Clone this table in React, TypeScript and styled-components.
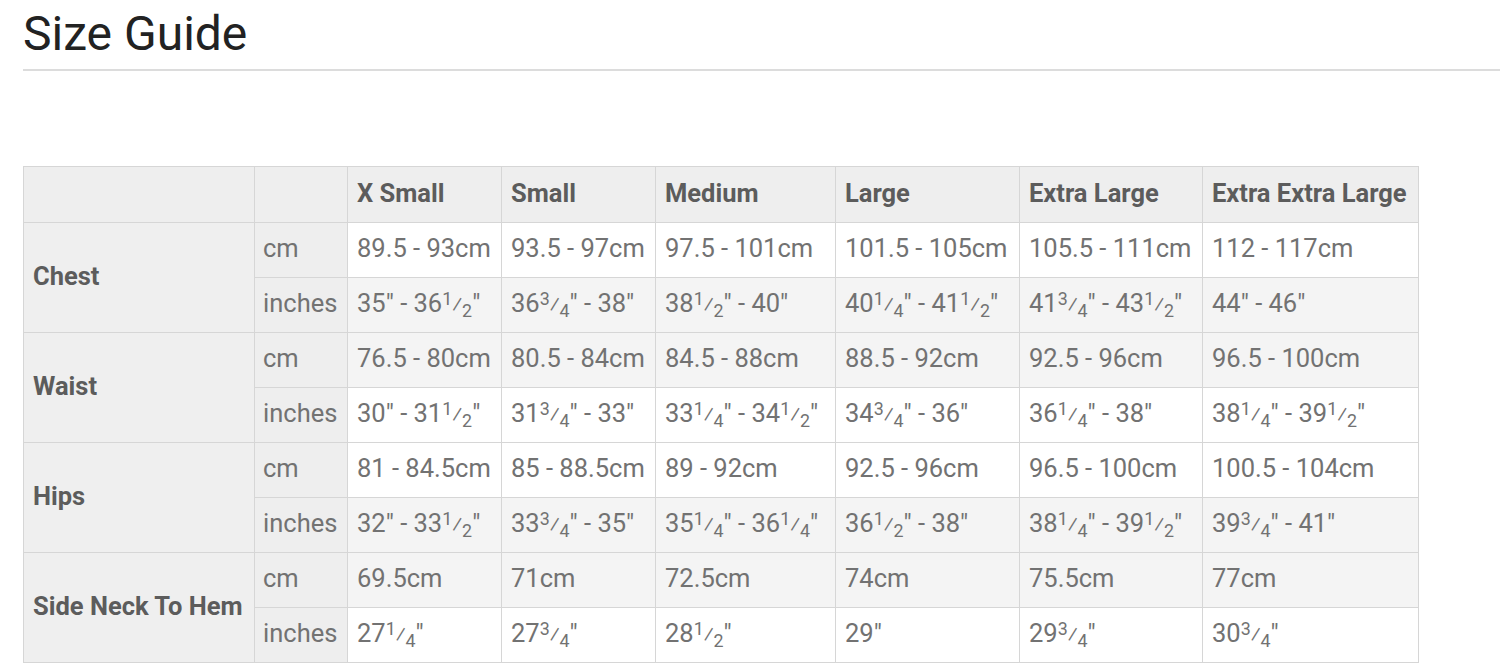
import React from "react";
import styled, { createGlobalStyle } from "styled-components";

const GlobalStyle = createGlobalStyle`
  body {
    margin: 0;
    background: #ffffff;
    font-family: Roboto, "Liberation Sans", Arial, sans-serif;
  }
`;

const Page = styled.div`
  padding: 0 0 0 23px;
`;

const Title = styled.h1`
  margin: 0;
  padding: 6px 0 7px;
  font-size: 48px;
  line-height: 56px;
  font-weight: 400;
  color: #222;
  border-bottom: 2px solid #dcdcdc;
`;

const Table = styled.table`
  margin-top: 95px;
  width: 1395px;
  border-collapse: collapse;
  table-layout: fixed;
  font-size: 25.5px;
  color: #727272;
`;

const HeadCell = styled.th`
  height: 51px;
  padding: 0 9px 4px;
  text-align: left;
  font-weight: 700;
  color: #5c5c5c;
  background: #eeeeee;
  border: 1px solid #d6d6d6;
  white-space: nowrap;
`;

const LabelCell = styled.th`
  padding: 0 9px 4px;
  text-align: left;
  font-weight: 700;
  color: #5c5c5c;
  background: #efefef;
  border: 1px solid #d6d6d6;
  white-space: nowrap;
`;

const UnitCell = styled.td`
  height: 50px;
  padding: 0 8px 4px;
  background: #eeeeee;
  border: 1px solid #d6d6d6;
  white-space: nowrap;
`;

const Cell = styled.td<{ $shade: boolean }>`
  height: 50px;
  padding: 0 9px 4px;
  background: ${(p) => (p.$shade ? "#f4f4f4" : "#ffffff")};
  border: 1px solid #d6d6d6;
  white-space: nowrap;
`;

const Sup = styled.span`
  font-size: 0.7em;
  vertical-align: 0.42em;
  line-height: 0;
`;

const Sub = styled.span`
  font-size: 0.7em;
  vertical-align: -0.28em;
  line-height: 0;
`;

const Slash = styled.span`
  font-size: 0.85em;
`;

const cols = [231, 93, 154, 154, 180, 184, 183, 216];
const sizes = ["X Small", "Small", "Medium", "Large", "Extra Large", "Extra Extra Large"];

// "36 1/2" - 38"" style strings -> fractions rendered with sup/sub
const Value = ({ text }: { text: string }) => {
  const parts = text.split(/(\d\/\d)/);
  return (
    <>
      {parts.map((p, i) => {
        const m = p.match(/^(\d)\/(\d)$/);
        if (!m) return <React.Fragment key={i}>{p}</React.Fragment>;
        return (
          <React.Fragment key={i}>
            <Sup>{m[1]}</Sup>
            <Slash>⁄</Slash>
            <Sub>{m[2]}</Sub>
          </React.Fragment>
        );
      })}
    </>
  );
};

type Group = { label: string; cm: string[]; inches: string[]; shade: [boolean, boolean] };

const groups: Group[] = [
  {
    label: "Chest",
    cm: ["89.5 - 93cm", "93.5 - 97cm", "97.5 - 101cm", "101.5 - 105cm", "105.5 - 111cm", "112 - 117cm"],
    inches: ['35" - 361/2"', '363/4" - 38"', '381/2" - 40"', '401/4" - 411/2"', '413/4" - 431/2"', '44" - 46"'],
    shade: [false, true],
  },
  {
    label: "Waist",
    cm: ["76.5 - 80cm", "80.5 - 84cm", "84.5 - 88cm", "88.5 - 92cm", "92.5 - 96cm", "96.5 - 100cm"],
    inches: ['30" - 311/2"', '313/4" - 33"', '331/4" - 341/2"', '343/4" - 36"', '361/4" - 38"', '381/4" - 391/2"'],
    shade: [true, false],
  },
  {
    label: "Hips",
    cm: ["81 - 84.5cm", "85 - 88.5cm", "89 - 92cm", "92.5 - 96cm", "96.5 - 100cm", "100.5 - 104cm"],
    inches: ['32" - 331/2"', '333/4" - 35"', '351/4" - 361/4"', '361/2" - 38"', '381/4" - 391/2"', '393/4" - 41"'],
    shade: [false, true],
  },
  {
    label: "Side Neck To Hem",
    cm: ["69.5cm", "71cm", "72.5cm", "74cm", "75.5cm", "77cm"],
    inches: ['271/4"', '273/4"', '281/2"', '29"', '293/4"', '303/4"'],
    shade: [true, false],
  },
];

export default function App() {
  return (
    <Page>
      <GlobalStyle />
      <Title>Size Guide</Title>
      <Table>
        <colgroup>
          {cols.map((w, i) => (
            <col key={i} style={{ width: w }} />
          ))}
        </colgroup>
        <thead>
          <tr>
            <HeadCell />
            <HeadCell />
            {sizes.map((s) => (
              <HeadCell key={s}>{s}</HeadCell>
            ))}
          </tr>
        </thead>
        <tbody>
          {groups.map((g) => (
            <React.Fragment key={g.label}>
              <tr>
                <LabelCell rowSpan={2}>{g.label}</LabelCell>
                <UnitCell>cm</UnitCell>
                {g.cm.map((v, i) => (
                  <Cell key={i} $shade={g.shade[0]}>
                    <Value text={v} />
                  </Cell>
                ))}
              </tr>
              <tr>
                <UnitCell>inches</UnitCell>
                {g.inches.map((v, i) => (
                  <Cell key={i} $shade={g.shade[1]}>
                    <Value text={v} />
                  </Cell>
                ))}
              </tr>
            </React.Fragment>
          ))}
        </tbody>
      </Table>
    </Page>
  );
}
